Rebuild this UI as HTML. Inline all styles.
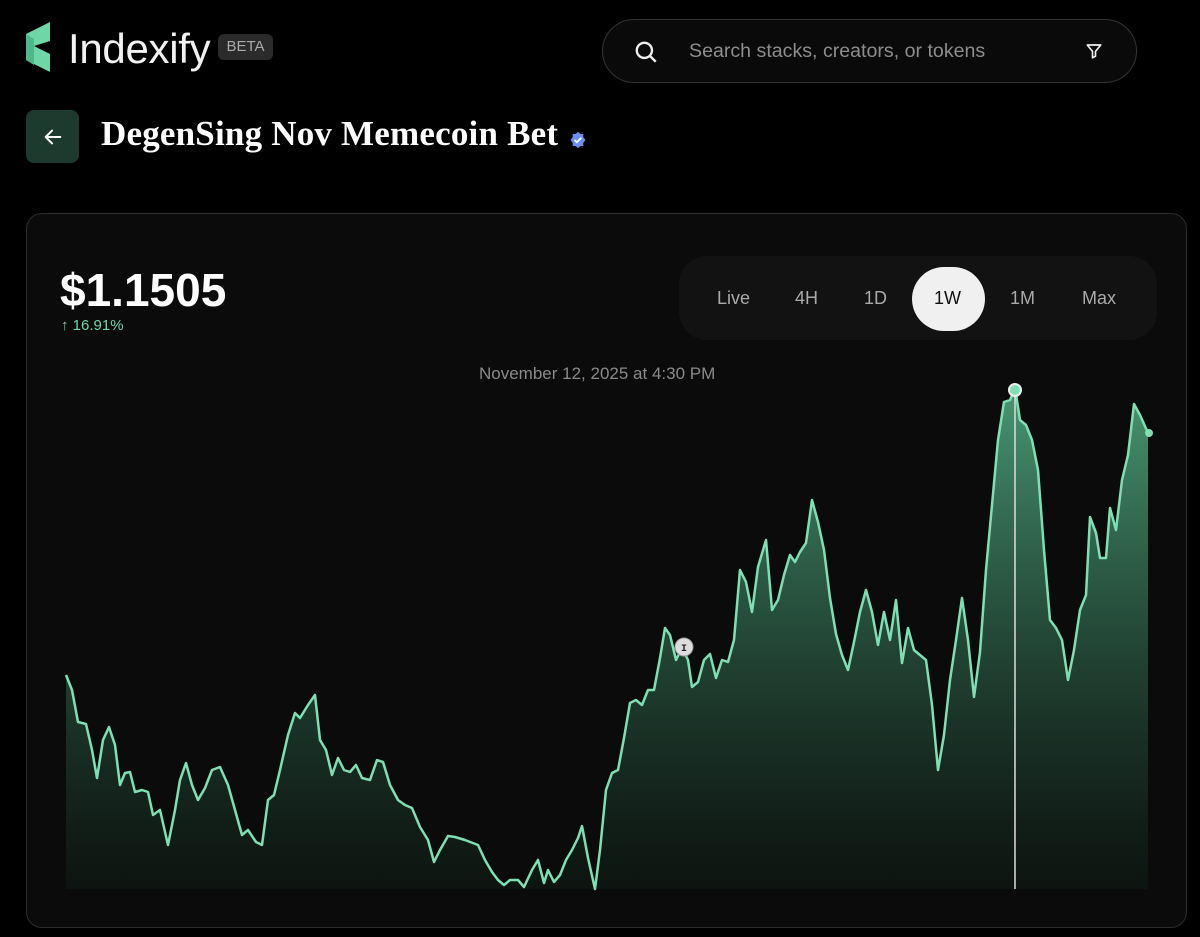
<!DOCTYPE html>
<html><head><meta charset="utf-8"><style>
*{margin:0;padding:0;box-sizing:border-box}
body{width:1200px;height:937px;background:#000;overflow:hidden;font-family:"Liberation Sans",sans-serif;position:relative;color:#fff}
.abs{position:absolute}
</style></head><body>
<svg class="abs" style="left:26px;top:22px" width="26" height="50" viewBox="0 0 26 50"><polygon points="0,12 24,0 24,19 8,24 24,32 24,50 0,38" fill="#6fd6a8"/><polygon points="0,12 8,17 8,43 0,38" fill="#4fb88a"/></svg>
<div class="abs" style="left:68px;top:25px;font-size:42px;color:#f2f2f2;letter-spacing:-0.3px">Indexify</div>
<div class="abs" style="left:218px;top:34px;width:55px;height:26px;background:#2b2b2b;border-radius:6px;color:#aaa;font-size:15px;line-height:26px;text-align:center">BETA</div>
<div class="abs" style="left:602px;top:19px;width:535px;height:64px;border:1px solid #333;border-radius:32px;background:#0a0a0a"></div>
<svg class="abs" style="left:633px;top:39px" width="26" height="26" viewBox="0 0 24 24" fill="none" stroke="#eee" stroke-width="2.2"><circle cx="10.5" cy="10.5" r="7"/><path d="M16 16l5 5"/></svg>
<div class="abs" style="left:689px;top:40px;font-size:19.6px;color:#8d8d8d">Search stacks, creators, or tokens</div>
<svg class="abs" style="left:1085px;top:42px" width="18" height="18" viewBox="0 0 24 24" fill="none" stroke="#eee" stroke-width="2.2" stroke-linejoin="round"><path d="M3 4h18l-7 8.5V19l-4 2v-8.5z"/></svg>
<div class="abs" style="left:26px;top:110px;width:53px;height:53px;background:#1c3a2e;border-radius:8px"></div>
<svg class="abs" style="left:42px;top:126px" width="22" height="22" viewBox="0 0 24 24" fill="none" stroke="#fff" stroke-width="2.2" stroke-linecap="round" stroke-linejoin="round"><path d="M20 12H4M11 5l-7 7 7 7"/></svg>
<div class="abs" style="left:101px;top:114px;font-family:'Liberation Serif',serif;font-weight:bold;font-size:35px;letter-spacing:0.2px;color:#fff">DegenSing Nov Memecoin Bet</div>
<svg class="abs" style="left:569px;top:131px" width="18" height="18" viewBox="0 0 24 24"><path d="M12 1l3 3h4v4l3 4-3 4v4h-4l-3 3-3-3H5v-4l-3-4 3-4V4h4z" fill="#6a8ff0"/><path d="M7.5 12l3 3 6-6" stroke="#fff" stroke-width="2.4" fill="none"/></svg>
<div class="abs" style="left:26px;top:213px;width:1161px;height:715px;border:1px solid #2c2c2c;border-radius:16px;background:#0b0b0b"></div>
<div class="abs" style="left:60px;top:263px;font-size:46px;font-weight:bold;color:#fff">$1.1505</div>
<div class="abs" style="left:61px;top:317px;font-size:15px;color:#6fd6a8">↑ 16.91%</div>
<div class="abs" style="left:679px;top:256px;width:478px;height:84px;background:#121212;border-radius:28px"></div>
<div class="abs" style="left:912px;top:267px;width:73px;height:64px;background:#f0f0f0;border-radius:32px"></div>
<div class="abs" style="top:288px;left:0;font-size:18px;color:#aaa">
<span class="abs" style="left:717px">Live</span><span class="abs" style="left:795px">4H</span><span class="abs" style="left:864px">1D</span><span class="abs" style="left:934px;color:#111">1W</span><span class="abs" style="left:1010px">1M</span><span class="abs" style="left:1082px">Max</span></div>
<div class="abs" style="left:479px;top:364px;font-size:17px;color:#8a8a8a">November 12, 2025 at 4:30 PM</div>
<svg class="abs" style="left:0;top:0" width="1200" height="937">
<defs>
<linearGradient id="g2" x1="0" y1="390" x2="0" y2="889" gradientUnits="userSpaceOnUse"><stop offset="0" stop-color="#5cc596" stop-opacity="0.75"/><stop offset="1" stop-color="#0f2219" stop-opacity="0.4"/></linearGradient></defs>
<polygon fill="url(#g2)" points="66,889 66,675 72,690 78,722 86,724 92,750 97,778 103,740 109,727 115,745 120,785 125,773 130,772 135,792 142,790 148,792 153,815 160,810 168,845 175,810 180,780 186,763 192,785 198,800 205,788 212,770 220,767 228,785 235,810 242,835 248,830 256,842 262,845 268,800 274,795 280,770 288,735 295,713 300,718 308,705 315,695 320,740 326,750 332,775 338,758 344,770 350,772 356,765 362,778 370,780 377,760 383,762 390,785 398,800 405,805 412,808 420,827 428,840 434,862 440,850 448,836 455,837 465,840 478,845 485,860 492,872 498,880 504,885 510,880 518,880 524,887 532,870 538,860 544,883 548,870 554,882 560,875 566,860 572,850 578,838 582,826 588,858 595,889 600,850 606,790 612,773 618,770 624,738 630,703 636,700 642,705 648,690 654,690 660,658 665,628 670,635 676,660 682,648 688,660 692,687 698,682 704,660 710,654 716,678 722,660 728,662 734,640 740,570 746,582 752,612 758,567 766,540 772,610 778,600 784,575 790,555 795,562 800,552 806,543 812,500 818,522 824,550 830,598 836,634 842,655 848,670 854,642 860,612 866,590 872,612 878,645 884,612 890,640 896,600 902,663 908,628 914,650 920,655 926,660 932,705 938,770 944,735 950,680 956,640 962,598 968,640 974,697 980,652 986,570 992,505 998,440 1004,402 1010,400 1015,388 1020,420 1026,425 1032,440 1038,470 1044,550 1050,620 1056,628 1062,640 1068,680 1074,650 1080,610 1086,595 1090,517 1096,533 1100,558 1106,558 1110,508 1116,530 1122,480 1128,455 1134,404 1140,415 1148,433 1148,889"/>
<polyline fill="none" stroke="#7ee0b2" stroke-width="2.5" stroke-linejoin="round" points="66,675 72,690 78,722 86,724 92,750 97,778 103,740 109,727 115,745 120,785 125,773 130,772 135,792 142,790 148,792 153,815 160,810 168,845 175,810 180,780 186,763 192,785 198,800 205,788 212,770 220,767 228,785 235,810 242,835 248,830 256,842 262,845 268,800 274,795 280,770 288,735 295,713 300,718 308,705 315,695 320,740 326,750 332,775 338,758 344,770 350,772 356,765 362,778 370,780 377,760 383,762 390,785 398,800 405,805 412,808 420,827 428,840 434,862 440,850 448,836 455,837 465,840 478,845 485,860 492,872 498,880 504,885 510,880 518,880 524,887 532,870 538,860 544,883 548,870 554,882 560,875 566,860 572,850 578,838 582,826 588,858 595,889 600,850 606,790 612,773 618,770 624,738 630,703 636,700 642,705 648,690 654,690 660,658 665,628 670,635 676,660 682,648 688,660 692,687 698,682 704,660 710,654 716,678 722,660 728,662 734,640 740,570 746,582 752,612 758,567 766,540 772,610 778,600 784,575 790,555 795,562 800,552 806,543 812,500 818,522 824,550 830,598 836,634 842,655 848,670 854,642 860,612 866,590 872,612 878,645 884,612 890,640 896,600 902,663 908,628 914,650 920,655 926,660 932,705 938,770 944,735 950,680 956,640 962,598 968,640 974,697 980,652 986,570 992,505 998,440 1004,402 1010,400 1015,388 1020,420 1026,425 1032,440 1038,470 1044,550 1050,620 1056,628 1062,640 1068,680 1074,650 1080,610 1086,595 1090,517 1096,533 1100,558 1106,558 1110,508 1116,530 1122,480 1128,455 1134,404 1140,415 1148,433"/>
<line x1="1015" y1="392" x2="1015" y2="889" stroke="#ddd" stroke-width="1.5"/>
<circle cx="1015" cy="390" r="6" fill="#7ee0b2" stroke="#eee" stroke-width="2"/>
<circle cx="1149" cy="433" r="4" fill="#7ee0b2"/>
<circle cx="684" cy="647" r="9" fill="#ddd" stroke="#999" stroke-width="1"/>
<text x="684" y="651" font-size="10" font-family="Liberation Mono" font-weight="bold" text-anchor="middle" fill="#222">I</text>
</svg>
</body></html>
